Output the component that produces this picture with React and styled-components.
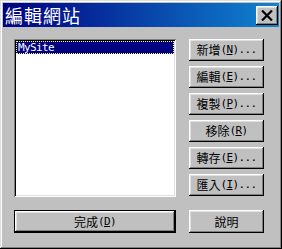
import React from 'react';
import styled, { createGlobalStyle } from 'styled-components';

const GlobalStyle = createGlobalStyle`
  html, body {
    margin: 0;
    padding: 0;
    background: #c0c0c0;
  }
  * {
    box-sizing: border-box;
  }
`;

const cjk = `"Noto Sans CJK TC", "Noto Sans CJK SC", sans-serif`;
const mono = `"DejaVu Sans Mono", "Liberation Mono", monospace`;

// WINDOW FRAME
const Window = styled.div`
  width: 282px;
  height: 249px;
  padding: 3px;
  background: #c0c0c0;
  box-shadow: inset -1px -1px #000000, inset 1px 1px #dfdfdf,
    inset -2px -2px #808080, inset 2px 2px #ffffff;
  display: flex;
  flex-direction: column;
`;

const TitleBar = styled.div`
  height: 24px;
  padding: 0 1px 0 2px;
  display: flex;
  align-items: center;
  justify-content: space-between;
  background: linear-gradient(to right, #000080, #1084d0);
`;

const TitleText = styled.span`
  font-family: ${cjk};
  font-size: 18px;
  line-height: 20px;
  color: #ffffff;
  letter-spacing: 1px;
`;

const CloseButton = styled.div`
  width: 22px;
  height: 19px;
  display: flex;
  align-items: center;
  justify-content: center;
  background: #c0c0c0;
  box-shadow: inset -1px -1px #000000, inset 1px 1px #ffffff,
    inset -2px -2px #808080, inset 2px 2px #dfdfdf;
`;

// BODY
const Body = styled.div`
  flex: 1;
  padding: 12px 0 0 11px;
  display: grid;
  grid-template-columns: 162px 75px;
  grid-template-rows: 158px 23px;
  column-gap: 13px;
  row-gap: 13px;
`;

const ListBox = styled.div`
  background: #ffffff;
  padding: 2px;
  box-shadow: inset 1px 1px #808080, inset -1px -1px #ffffff,
    inset 2px 2px #000000, inset -2px -2px #dfdfdf;
`;

const ListItem = styled.div`
  height: 13px;
  padding-left: 1px;
  font-family: ${mono};
  font-size: 11px;
  letter-spacing: -0.6px;
  line-height: 11px;
  color: ${p => (p.selected ? '#ffffff' : '#000000')};
  background: ${p => (p.selected ? '#000080' : 'transparent')};
  border: 1px dotted ${p => (p.selected ? '#ffff7f' : 'transparent')};
`;

const ButtonColumn = styled.div`
  display: flex;
  flex-direction: column;
  gap: 5px;
`;

const Button = styled.div`
  height: ${p => (p.tall ? 23 : 22)}px;
  display: flex;
  align-items: center;
  justify-content: center;
  background: #c0c0c0;
  color: #000000;
  box-shadow: ${p =>
    p.primary
      ? 'inset 0 0 0 1px #000000, inset -2px -2px #000000, inset 2px 2px #ffffff, inset -3px -3px #808080, inset 3px 3px #dfdfdf'
      : 'inset -1px -1px #000000, inset 1px 1px #ffffff, inset -2px -2px #808080, inset 2px 2px #dfdfdf'};
`;

const Cjk = styled.span`
  font-family: ${cjk};
  font-size: 12px;
  line-height: 14px;
`;

const Latin = styled.span`
  font-family: ${mono};
  font-size: 11px;
  letter-spacing: -0.6px;
  line-height: 14px;
  u {
    text-decoration-thickness: 1px;
    text-underline-offset: 1px;
  }
`;

const Label = ({ text, hot, more }) => (
  <>
    <Cjk>{text}</Cjk>
    {hot && (
      <Latin>
        (<u>{hot}</u>){more ? '...' : ''}
      </Latin>
    )}
  </>
);

const actions = [
  { text: '新增', hot: 'N', more: true },
  { text: '編輯', hot: 'E', more: true },
  { text: '複製', hot: 'P', more: true },
  { text: '移除', hot: 'R', more: false },
  { text: '轉存', hot: 'E', more: true },
  { text: '匯入', hot: 'I', more: true },
];

const CloseIcon = () => (
  <svg width="12" height="11" viewBox="0 0 12 11">
    <path d="M1 0.5 L11 10.5 M11 0.5 L1 10.5" stroke="#000" strokeWidth="2.2" />
  </svg>
);

export default function App() {
  return (
    <>
      <GlobalStyle />
      <Window>
        <TitleBar>
          <TitleText>編輯網站</TitleText>
          <CloseButton>
            <CloseIcon />
          </CloseButton>
        </TitleBar>
        <Body>
          <ListBox>
            <ListItem selected>MySite</ListItem>
          </ListBox>
          <ButtonColumn>
            {actions.map((a, i) => (
              <Button key={`act-${i}`}>
                <Label {...a} />
              </Button>
            ))}
          </ButtonColumn>
          <Button tall primary>
            <Label text="完成" hot="D" />
          </Button>
          <Button tall>
            <Label text="說明" />
          </Button>
        </Body>
      </Window>
    </>
  );
}
